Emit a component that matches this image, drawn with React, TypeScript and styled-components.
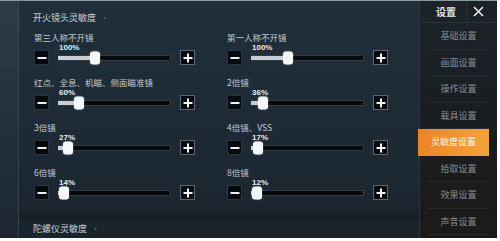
import React from "react";
import styled, { createGlobalStyle } from "styled-components";

const GlobalStyle = createGlobalStyle`
  html, body {
    margin: 0;
    padding: 0;
    background: #ffffff;
  }
  body {
    font-family: "Noto Sans CJK SC", "Noto Sans", sans-serif;
  }
`;

const Screen = styled.div`
  width: 497px;
  height: 238px;
  display: flex;
  overflow: hidden;
  background: linear-gradient(180deg, #2b3c48 0%, #24333f 40%, #1c2731 100%);
  border-top: 1px solid #8a9aa5;
  box-sizing: border-box;
`;

const Panel = styled.div`
  margin-left: 18px;
  width: 400px;
  display: flex;
  flex-direction: column;
  background: linear-gradient(180deg, #1f2f3b 0%, #1d2a35 60%, #19232c 100%);
  border-left: 1px solid #33444f;
`;

const SectionTitle = styled.div<{ $top?: number }>`
  height: 22px;
  padding: ${(p) => p.$top ?? 10}px 0 0 14px;
  font-size: 9px;
  color: #c9d0d5;
  box-sizing: border-box;
  &::after {
    content: "·";
    margin-left: 4px;
    color: #56636c;
  }
`;

const Grid = styled.div`
  display: grid;
  grid-template-columns: 193px 193px;
  padding: 8px 0 0 14px;
`;

const Cell = styled.div`
  height: 45px;
  display: flex;
  flex-direction: column;
`;

const Label = styled.div`
  font-size: 8.5px;
  line-height: 12px;
  color: #c3cad0;
  padding-left: 1px;
`;

const Controls = styled.div`
  display: flex;
  align-items: flex-end;
  gap: 9px;
  padding-left: 1px;
`;

const StepButton = styled.div<{ $plus?: boolean }>`
  width: 15px;
  height: 15px;
  background: #070a0d;
  border: 1px solid ${(p) => (p.$plus ? "#5c666d" : "#2a3540")};
  box-sizing: border-box;
  position: relative;
  flex-shrink: 0;
  &::before,
  &::after {
    content: "";
    position: absolute;
    background: #f0f2f3;
    left: 50%;
    top: 50%;
  }
  &::before {
    width: 9px;
    height: 2px;
    transform: translate(-50%, -50%);
  }
  &::after {
    display: ${(p) => (p.$plus ? "block" : "none")};
    width: 2px;
    height: 9px;
    transform: translate(-50%, -50%);
  }
`;

const TrackWrap = styled.div`
  width: 113px;
  display: flex;
  flex-direction: column;
`;

const Percent = styled.div`
  font-size: 8px;
  font-weight: 700;
  color: #e8ecee;
  line-height: 9px;
  padding-left: 1px;
  font-family: "Liberation Sans", "Noto Sans", sans-serif;
`;

const Track = styled.div`
  position: relative;
  height: 4px;
  margin: 3px 0 4px;
  background: #06090c;
  border: 1px solid #2f3a43;
  border-left: none;
`;

const Fill = styled.div`
  position: absolute;
  left: 0;
  top: 0;
  bottom: 0;
  background: #c7cdd1;
`;

const Thumb = styled.div`
  position: absolute;
  top: 50%;
  width: 10px;
  height: 13px;
  border-radius: 3px;
  background: #f6f7f8;
  transform: translate(-50%, -50%);
  box-shadow: 0 0 2px rgba(255, 255, 255, 0.4);
`;

const Divider = styled.div`
  height: 10px;
  background: linear-gradient(180deg, #1a242d, #141c23);
`;

const Sidebar = styled.div`
  flex: 1;
  display: flex;
  flex-direction: column;
  background: linear-gradient(180deg, #1c232a 0%, #191d21 50%, #1d1a17 100%);
  border-left: 1px solid #2a3540;
`;

const SideHeader = styled.div`
  height: 21px;
  display: flex;
  align-items: center;
  border-bottom: 1px solid #2c343b;
`;

const SideTitle = styled.div`
  flex: 1;
  font-size: 10px;
  font-weight: 700;
  color: #e4e7e9;
  padding-left: 16px;
`;

const CloseBox = styled.div`
  width: 21px;
  height: 21px;
  margin-right: 8px;
  display: flex;
  align-items: center;
  justify-content: center;
  background: #1a2026;
  border-left: 1px solid #2a3138;
`;

const SideItem = styled.div<{ $active?: boolean }>`
  height: 26.5px;
  display: flex;
  align-items: center;
  justify-content: center;
  margin: 0 8px 0 ${(p) => (p.$active ? "-2px" : "8px")};
  font-size: 9px;
  color: ${(p) => (p.$active ? "#fff3e0" : "#858d93")};
  background: ${(p) =>
    p.$active ? "linear-gradient(90deg, #ec8426 0%, #f39a33 70%, #f0a43c 100%)" : "transparent"};
  border-bottom: 1px solid ${(p) => (p.$active ? "transparent" : "#262d33")};
  box-sizing: border-box;
`;

const sliders = [
  { label: "第三人称不开镜", value: 100, pos: 33 },
  { label: "第一人称不开镜", value: 100, pos: 33 },
  { label: "红点、全息、机瞄、侧面瞄准镜", value: 60, pos: 19 },
  { label: "2倍镜", value: 36, pos: 11 },
  { label: "3倍镜", value: 27, pos: 9 },
  { label: "4倍镜、VSS", value: 17, pos: 6 },
  { label: "6倍镜", value: 14, pos: 5 },
  { label: "8倍镜", value: 12, pos: 5 },
];

const menu = ["基础设置", "画面设置", "操作设置", "载具设置", "灵敏度设置", "拾取设置", "效果设置", "声音设置"];

function SliderCell({ label, value, pos }: { label: string; value: number; pos: number }) {
  return (
    <Cell>
      <Label>{label}</Label>
      <Controls>
        <StepButton />
        <TrackWrap>
          <Percent>{value}%</Percent>
          <Track>
            <Fill style={{ width: `${pos}%` }} />
            <Thumb style={{ left: `${pos}%` }} />
          </Track>
        </TrackWrap>
        <StepButton $plus />
      </Controls>
    </Cell>
  );
}

export default function App() {
  return (
    <>
      <GlobalStyle />
      <Screen>
        <Panel>
          <SectionTitle>开火镜头灵敏度</SectionTitle>
          <Grid>
            {sliders.map((s) => (
              <SliderCell key={s.label} {...s} />
            ))}
          </Grid>
          <Divider />
          <SectionTitle $top={3}>陀螺仪灵敏度</SectionTitle>
        </Panel>
        <Sidebar>
          <SideHeader>
            <SideTitle>设置</SideTitle>
            <CloseBox>
              <svg width="11" height="11" viewBox="0 0 11 11">
                <path d="M1 1L10 10M10 1L1 10" stroke="#f2f4f5" strokeWidth="1.5" />
              </svg>
            </CloseBox>
          </SideHeader>
          {menu.map((m) => (
            <SideItem key={m} $active={m === "灵敏度设置"}>
              {m}
            </SideItem>
          ))}
        </Sidebar>
      </Screen>
    </>
  );
}
